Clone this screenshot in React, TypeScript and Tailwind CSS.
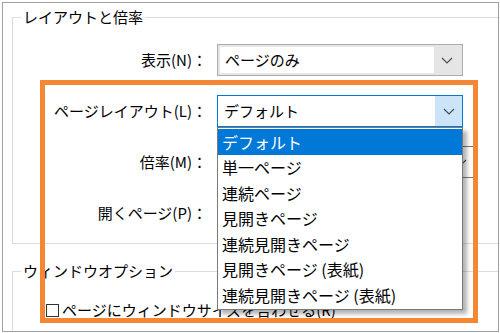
import type { ReactNode } from "react";

const FONT = { fontFamily: '"Noto Sans CJK JP", "Noto Sans", sans-serif' };

const LIST_ITEMS = [
  "デフォルト",
  "単一ページ",
  "連続ページ",
  "見開きページ",
  "連続見開きページ",
  "見開きページ (表紙)",
  "連続見開きページ (表紙)",
];

function Chevron() {
  return (
    <svg width="12" height="7" viewBox="0 0 12 7" fill="none">
      <path d="M1 1 L6 6 L11 1" stroke="#4d4d4d" strokeWidth="1.2" />
    </svg>
  );
}

function Row({ label, children }: { label: string; children: ReactNode }) {
  return (
    <div className="flex h-[32px] items-center">
      <div className="w-[194px] shrink-0 text-right text-[15px] leading-[20px] text-black">{label}</div>
      <div className="ml-[10px] h-full">{children}</div>
    </div>
  );
}

export default function App() {
  return (
    <div className="relative h-[333px] w-[500px] overflow-hidden bg-white" style={FONT}>
      {/* dialog frame */}
      <div className="ml-[2px] mt-[2px] h-[330px] w-[497px] overflow-hidden border border-[#a0a0a0] bg-white">
        <div className="w-[600px] pl-[9px] pt-[4px]">
          {/* layout & zoom */}
          <fieldset className="h-[237px] w-[540px] border border-[#dcdcdc]">
            <legend className="ml-[8px] px-[2px] text-[15px] leading-[20px] text-black">レイアウトと倍率</legend>
            <div className="flex flex-col gap-[19px] pt-[17px]">
              <Row label="表示(N)：">
                <div className="flex h-full w-[246px] border border-[#adadad] bg-[#e5e5e5] p-[2px]">
                  <div className="flex flex-1 items-center bg-white pl-[5px] text-[15px] text-black">ページのみ</div>
                  <div className="flex w-[26px] items-center justify-center">
                    <Chevron />
                  </div>
                </div>
              </Row>
              <Row label="ページレイアウト(L)：">
                <div className="flex h-full w-[246px] border border-[#0078d7] bg-white">
                  <div className="flex flex-1 items-center pl-[6px] text-[15px] text-black">デフォルト</div>
                  <div className="flex w-[27px] items-center justify-center bg-[#cce4f7]">
                    <Chevron />
                  </div>
                </div>
              </Row>
              <Row label="倍率(M)：">
                {/* mostly hidden under the open list */}
                <div className="flex h-full w-[259px] border border-[#7a7a7a] bg-white">
                  <div className="flex-1" />
                  <div className="flex w-[28px] items-center justify-center">
                    <Chevron />
                  </div>
                </div>
              </Row>
              <Row label="開くページ(P)：">
                <div className="h-full w-[120px] border border-[#7a7a7a] bg-white" />
              </Row>
            </div>
          </fieldset>

          {/* window options */}
          <fieldset className="mt-[17px] h-[120px] w-[540px] border border-[#dcdcdc]">
            <legend className="ml-[8px] px-[2px] text-[15px] leading-[20px] text-black">ウィンドウオプション</legend>
            <div className="mt-[19px] flex h-[20px] items-center gap-[3px] pl-[33px]">
              <div className="h-[13px] w-[13px] border border-[#333333] bg-white" />
              <span className="text-[15px] leading-[20px] text-black">ページにウィンドウサイズを合わせる(R)</span>
            </div>
          </fieldset>
        </div>
      </div>

      {/* open dropdown list */}
      <div className="absolute left-[217px] top-[127px] w-[246px] border border-[#7a7a7a] bg-white py-px shadow-[4px_4px_4px_rgba(0,0,0,0.3)]">
        {LIST_ITEMS.map((item, i) => (
          <div
            key={item}
            className={
              i === 0
                ? "flex h-[25.5px] items-center bg-[#0078d7] pl-[4px] text-[16px] text-white"
                : "flex h-[25.5px] items-center pl-[4px] text-[16px] text-black"
            }
          >
            {item}
          </div>
        ))}
      </div>

      {/* highlight annotation */}
      <div className="pointer-events-none absolute left-[40px] top-[80px] h-[243px] w-[438px] border-[5px] border-[#f58634]" />
    </div>
  );
}
